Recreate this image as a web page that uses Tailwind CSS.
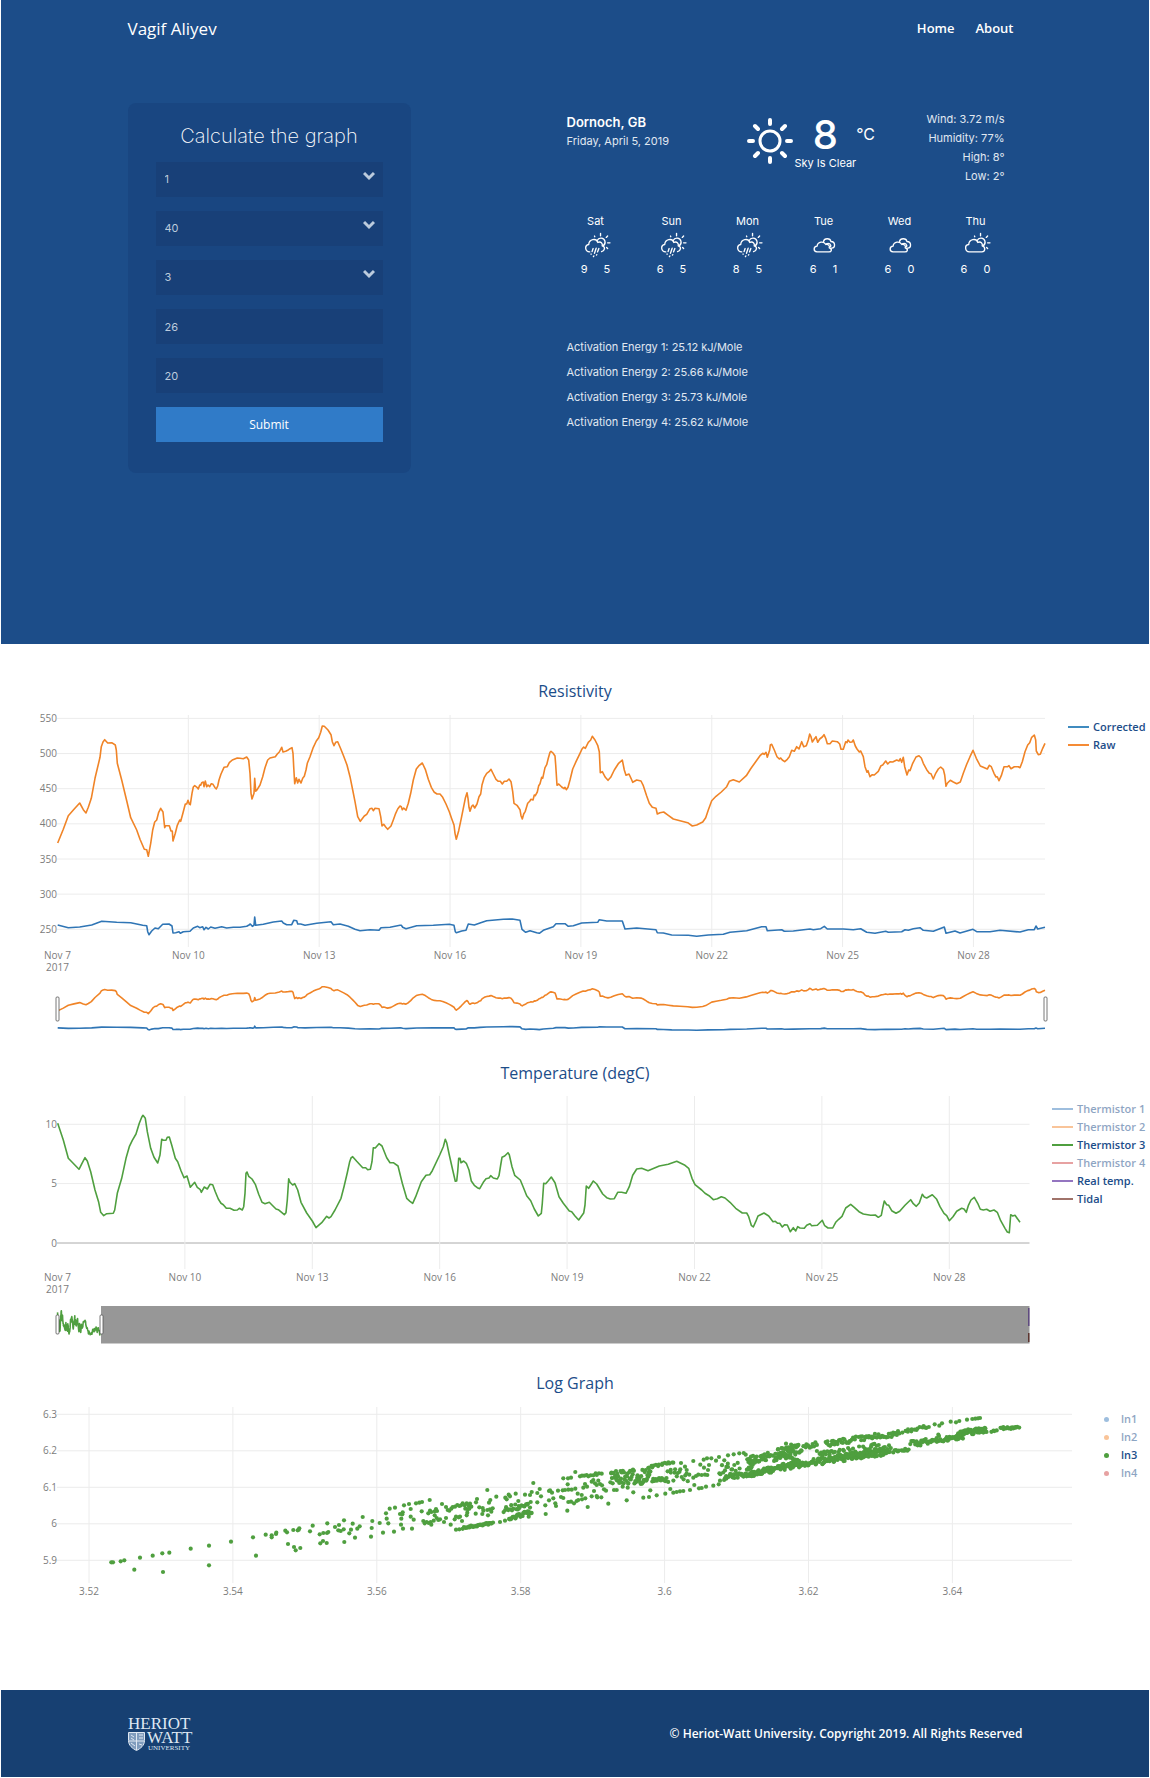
<!DOCTYPE html>
<html lang="en">
<head>
<meta charset="utf-8">
<meta name="viewport" content="width=device-width, initial-scale=1">
<title>Vagif Aliyev</title>
<script src="https://cdn.jsdelivr.net/npm/@tailwindcss/browser@4"></script>
</head>
<body class="bg-white font-['Open_Sans',sans-serif]">
<svg class="hidden" aria-hidden="true">
  <symbol id="sunny-cloud" viewBox="0 0 80 80">
    <g fill="none" stroke="currentColor" stroke-width="4" stroke-linecap="round" stroke-linejoin="round">
      <path d="M16 59C2 58 1 38 14 37C15 21 36 17 41 31C50 27 56 34 54 41C65 44 63 59 53 59Z"/>
      <path d="M39 25C44 15 59 16 62 27C64 34 61 38 57 41"/>
      <path d="M49 4v7M31 12l1 2M66 16l4-4M70 32h7M67 46l3 3"/>
    </g>
  </symbol>
  <symbol id="rain" viewBox="0 0 80 80">
    <g fill="none" stroke="currentColor" stroke-width="4" stroke-linecap="round" stroke-linejoin="round">
      <path d="M17 59C2 58 1 38 14 37C15 21 36 17 41 31C50 27 56 34 54 41C65 44 61 56 52 58"/>
      <path d="M39 25C44 15 59 16 62 27C64 34 61 38 57 41"/>
      <path d="M49 4v7M31 12l1 2M66 16l4-4M70 32h7M67 46l3 3"/>
      <path d="M27 49l-3 9M36 48l-5 15M44 49l-4 10M21 65l0 1M29 71l-1 2M38 67l-1 1"/>
    </g>
  </symbol>
  <symbol id="clouds" viewBox="0 0 80 80">
    <g fill="none" stroke="currentColor" stroke-width="4" stroke-linecap="round" stroke-linejoin="round">
      <path d="M15 59C3 58 4 43 15 42C17 28 35 26 41 37C50 36 53 42 51 47C61 50 58 59 50 59Z"/>
      <path d="M34 28C37 17 54 18 56 28C70 28 70 47 58 48"/>
      <path d="M42 35C51 31 58 37 55 44"/>
    </g>
  </symbol>
</svg>

<header class="mx-px bg-[#1c4d89] text-white px-[11%] pb-[171px]">
  <nav class="flex items-center justify-between h-[58px]">
    <a href="#" class="text-[17px]">Vagif Aliyev</a>
    <div class="flex gap-[21px] pr-[9px] text-[13px] font-semibold">
      <a href="#">Home</a>
      <a href="#">About</a>
    </div>
  </nav>
  <div class="flex items-start justify-between pt-[45px]">
    <form class="w-[283px] shrink-0 rounded-lg bg-[#194681] px-7 pt-[17px] pb-[31px] flex flex-col gap-[14px]">
      <h1 class="h-7 leading-8 text-center text-[20px] font-extralight font-[Inter,sans-serif]">Calculate the graph</h1>
      <div class="relative text-[11px] text-[#bccbdd] font-[Inter,sans-serif]">
        <select aria-label="Start" class="appearance-none w-full h-[35px] bg-[#184078] pl-[9px]"><option>1</option></select>
        <svg class="absolute right-2 top-2 w-3 h-3 pointer-events-none" viewBox="0 0 12 12" fill="none" stroke="currentColor" stroke-width="3"><path d="M1 3l5 5 5-5"/></svg>
      </div>
      <div class="relative text-[11px] text-[#bccbdd] font-[Inter,sans-serif]">
        <select aria-label="End" class="appearance-none w-full h-[35px] bg-[#184078] pl-[9px]"><option>40</option></select>
        <svg class="absolute right-2 top-2 w-3 h-3 pointer-events-none" viewBox="0 0 12 12" fill="none" stroke="currentColor" stroke-width="3"><path d="M1 3l5 5 5-5"/></svg>
      </div>
      <div class="relative text-[11px] text-[#bccbdd] font-[Inter,sans-serif]">
        <select aria-label="Thermistor" class="appearance-none w-full h-[35px] bg-[#184078] pl-[9px]"><option>3</option></select>
        <svg class="absolute right-2 top-2 w-3 h-3 pointer-events-none" viewBox="0 0 12 12" fill="none" stroke="currentColor" stroke-width="3"><path d="M1 3l5 5 5-5"/></svg>
      </div>
      <input aria-label="Reference temperature" value="26" class="w-full h-[35px] bg-[#184078] px-[9px] text-[11px] text-[#bccbdd] font-[Inter,sans-serif]">
      <input aria-label="Coefficient" value="20" class="w-full h-[35px] bg-[#184078] px-[9px] text-[11px] text-[#bccbdd] font-[Inter,sans-serif]">
      <button type="button" class="h-[35px] bg-[#307bc8] text-[12px] font-medium text-white">Submit</button>
    </form>

    <div class="w-[456px] shrink-0 font-[Inter,sans-serif] text-[11px] mr-[9px]">
      <div class="flex justify-between pl-[9px] pr-[9px] h-[107px]">
        <div class="pt-[9px]">
          <p class="text-[13px] leading-5 font-semibold">Dornoch, GB</p>
          <p class="leading-[18px] text-[#e0e8f1]">Friday, April 5, 2019</p>
        </div>
        <div class="flex pt-[14px] pl-[26px]">
          <svg class="w-12 h-12" viewBox="0 0 48 48" fill="none" stroke="currentColor" stroke-width="3" stroke-linecap="round"><circle cx="24" cy="24" r="10"/><path stroke-width="4" d="M24 3v4M24 41v4M3 24h4M41 24h4M9 9l3 3M36 36l3 3M9 39l3-3M36 12l3-3"/></svg>
          <div class="flex flex-col items-center">
            <span class="text-[40px] font-medium leading-9">8</span>
            <span class="leading-5">Sky Is Clear</span>
          </div>
          <span class="text-[16px] leading-[34px]">°C</span>
        </div>
        <div class="text-right leading-[19px] pt-[7px] text-[#e0e8f1]">
          <p>Wind: 3.72 m/s</p><p>Humidity: 77%</p><p>High: 8°</p><p>Low: 2°</p>
        </div>
      </div>
      <div class="grid grid-cols-6 text-center">
        <div class="flex flex-col items-center"><span class="leading-[22px]">Sat</span><svg class="w-[27px] h-[27px] ml-1"><use href="#rain"/></svg><p class="flex gap-4 leading-5"><span>9</span><span>5</span></p></div>
        <div class="flex flex-col items-center"><span class="leading-[22px]">Sun</span><svg class="w-[27px] h-[27px] ml-1"><use href="#rain"/></svg><p class="flex gap-4 leading-5"><span>6</span><span>5</span></p></div>
        <div class="flex flex-col items-center"><span class="leading-[22px]">Mon</span><svg class="w-[27px] h-[27px] ml-1"><use href="#rain"/></svg><p class="flex gap-4 leading-5"><span>8</span><span>5</span></p></div>
        <div class="flex flex-col items-center"><span class="leading-[22px]">Tue</span><svg class="w-[27px] h-[27px] ml-1"><use href="#clouds"/></svg><p class="flex gap-4 leading-5"><span>6</span><span>1</span></p></div>
        <div class="flex flex-col items-center"><span class="leading-[22px]">Wed</span><svg class="w-[27px] h-[27px] ml-1"><use href="#clouds"/></svg><p class="flex gap-4 leading-5"><span>6</span><span>0</span></p></div>
        <div class="flex flex-col items-center"><span class="leading-[22px]">Thu</span><svg class="w-[27px] h-[27px] ml-1"><use href="#sunny-cloud"/></svg><p class="flex gap-4 leading-5"><span>6</span><span>0</span></p></div>
      </div>
      <div class="pl-[9px] pt-14 leading-[25px] text-[#e0e8f1]">
        <p>Activation Energy 1: 25.12 kJ/Mole</p>
        <p>Activation Energy 2: 25.66 kJ/Mole</p>
        <p>Activation Energy 3: 25.73 kJ/Mole</p>
        <p>Activation Energy 4: 25.62 kJ/Mole</p>
      </div>
    </div>
  </div>
</header>

<main class="text-[#1c4d89]">
  <section>
    <h2 class="pt-[35px] h-[66px] leading-6 text-center text-[16px] font-medium">Resistivity</h2>
    <div class="flex">
      <svg id="resistivity" class="flex-1 min-w-0 text-[10px]" viewBox="0 710 1068 335"></svg>
      <div class="w-[82px] shrink-0 pt-2 text-[11px] font-semibold">
        <button type="button" class="flex items-center gap-1 h-[18px]"><span class="w-[21px] h-[2px] bg-[#1f77b4]/85"></span>Corrected</button>
        <button type="button" class="flex items-center gap-1 h-[18px]"><span class="w-[21px] h-[2px] bg-[#f58b35]"></span>Raw</button>
      </div>
    </div>
  </section>
  <section>
    <h2 class="pt-4 h-[45px] leading-6 text-center text-[16px] font-medium">Temperature (degC)</h2>
    <div class="flex">
      <svg id="temperature" class="flex-1 min-w-0 text-[10px]" viewBox="0 1090 1052 260"></svg>
      <div class="w-[98px] shrink-0 pt-[10px] text-[11px] font-semibold">
        <button type="button" class="flex items-center gap-1 h-[18px] opacity-50"><span class="w-[21px] h-[2px] bg-[#3f7fbf]"></span>Thermistor 1</button>
        <button type="button" class="flex items-center gap-1 h-[18px] opacity-50"><span class="w-[21px] h-[2px] bg-[#f58b35]"></span>Thermistor 2</button>
        <button type="button" class="flex items-center gap-1 h-[18px]"><span class="w-[21px] h-[2px] bg-[#4f9f3f]"></span>Thermistor 3</button>
        <button type="button" class="flex items-center gap-1 h-[18px] opacity-50"><span class="w-[21px] h-[2px] bg-[#d04848]"></span>Thermistor 4</button>
        <button type="button" class="flex items-center gap-1 h-[18px]"><span class="w-[21px] h-[2px] bg-[#9475c0]"></span>Real temp.</button>
        <button type="button" class="flex items-center gap-1 h-[18px]"><span class="w-[21px] h-[2px] bg-[#a0736a]"></span>Tidal</button>
      </div>
    </div>
  </section>
  <section>
    <h2 class="pt-[21px] h-[50px] leading-6 text-center text-[16px] font-medium">Log Graph</h2>
    <div class="flex">
      <svg id="log-graph" class="flex-1 min-w-0 text-[10px]" viewBox="0 1400 1104 200"></svg>
      <div class="w-[46px] shrink-0 pt-[10px] text-[11px] font-semibold">
        <button type="button" class="flex items-center gap-3 h-[18px] opacity-50"><span class="w-[5px] h-[5px] rounded-full bg-[#3f7fbf]"></span>ln1</button>
        <button type="button" class="flex items-center gap-3 h-[18px] opacity-50"><span class="w-[5px] h-[5px] rounded-full bg-[#f58b35]"></span>ln2</button>
        <button type="button" class="flex items-center gap-3 h-[18px]"><span class="w-[5px] h-[5px] rounded-full bg-[#4f9f3f]"></span>ln3</button>
        <button type="button" class="flex items-center gap-3 h-[18px] opacity-50"><span class="w-[5px] h-[5px] rounded-full bg-[#d04848]"></span>ln4</button>
      </div>
    </div>
  </section>
</main>

<footer class="mt-[90px] mx-px mb-px bg-[#174072] text-white h-[87px] px-[11%] flex items-center justify-between">
  <svg class="w-16 h-[34px] overflow-visible" viewBox="0 0 64 34" fill="#dfe8f2" font-family="Liberation Serif, serif" role="img" aria-label="Heriot Watt University">
    <text x="0" y="12" font-size="17">HERIOT</text>
    <text x="19" y="26" font-size="17">WATT</text>
    <text x="20" y="33" font-size="7">UNIVERSITY</text>
    <path d="M.5 15.500h16v8c0 5-4 8-8 10c-4-2-8-5-8-10z" fill="#7f9cbd" stroke="#dfe8f2"/>
    <path d="M3 18l3 2M3 21l3 2M8.500 16v17M1 24h15M11 18h4M11 21h4M3 26l4 3M11 27l3 1" stroke="#dfe8f2" fill="none"/>
  </svg>
  <p class="text-[12px] font-semibold">© Heriot-Watt University. Copyright 2019. All Rights Reserved</p>
</footer>

<script>
const NS = 'http://www.w3.org/2000/svg';
function add(parent, tag, attrs, text) {
  const el = document.createElementNS(NS, tag);
  for (const k in attrs) el.setAttribute(k, attrs[k]);
  if (text !== undefined) el.textContent = text;
  parent.appendChild(el);
  return el;
}
// Samples are stored in thirds of a plot unit, in chunks that each start at their own x.
function parse(chunks) {
  return chunks.flatMap(([dx, s]) => s.trim().split(/\s+/).map(p => {
    const [x, y] = p.split(',').map(Number);
    return [x + dx, y];
  }));
}
function line(svg, pts, color, fx, fy, w = 1.6) {
  add(svg, 'polyline', { points: pts.map(([x, y]) => fx(x).toFixed(1) + ',' + fy(y).toFixed(1)).join(' '),
    fill: 'none', stroke: color, 'stroke-width': w, 'stroke-linejoin': 'round' });
}
function axes(svg, o) {
  for (const [y, label] of o.ys) {
    add(svg, 'line', { x1: 57, x2: o.right, y1: y, y2: y, stroke: label === '0' && o.zero ? '#aaa' : '#ececec' });
    add(svg, 'text', { x: 57, y: y + 3.5, 'text-anchor': 'end', fill: '#7c7c7c' }, label);
  }
  for (const [x, label] of o.xs) {
    if (x > 57.5) add(svg, 'line', { x1: x, x2: x, y1: o.top, y2: o.bottom, stroke: '#ececec' });
    add(svg, 'text', { x, y: o.bottom + 11.5, 'text-anchor': 'middle', fill: '#7c7c7c' }, label);
  }
  if (o.year) add(svg, 'text', { x: 57.5, y: o.bottom + 24, 'text-anchor': 'middle', fill: '#7c7c7c' }, '2017');
}
const handle = (svg, x, y, h) => add(svg, 'rect', { x: x - 1.5, y, width: 3, height: h, rx: 1, fill: '#fff', stroke: '#555', 'stroke-width': 0.8 });

const raw = parse([
 [0, `173,519 190,478 205,437 222,418 239,399 250,419 258,429 265,412 274,385 285,325 300,262 304,230 309,216 314,209 323,219 335,218 346,225 349,240 352,280 365,330 380,392 392,443 410,480 420,508 433,538 440,539 445,559 452,520 458,480 464,456 470,450 476,427 482,415 489,426 494,473 497,467 508,467 513,483 517,483 519,513 526,490 532,466 539,450 542,454 548,432 556,402 560,402 564,391 568,402 571,404 576,370 580,351 584,347 592,353 595,357 599,345 602,346 605,338 610,336 612,350 616,333 620,350 624,345 629,350 634,341 639,343 645,353 649,357 653,348 657,330 663,312 672,292 682,290 688,278 697,270 712,264 720,265 730,266 740,261 746,270 750,310 753,370 756,387 762,370 764,325 767,364 770,361 780,345 788,320 795,293 803,270 810,264 826,260 832,252 838,246 845,232 849,246 857,244 863,241 870,236 876,233 879,250 881,290 884,341 889,323 893,339 897,328 903,339 908,325 913,319 918,300 922,280 930,260 940,232 949,213 956,203 962,187 967,168 973,169 984,180 993,194 997,215 1002,227 1007,217 1013,215 1022,236 1031,259 1041,285 1050,320 1058,360 1065,395 1073,440 1081,454 1093,438 1100,433 1110,416 1116,415 1120,422 1125,415 1137,416 1142,440 1146,468 1151,463 1157,471 1163,478 1173,468 1180,450 1187,430 1193,417`],
 [1140, `60,408 64,410 67,419 71,414 78,421 85,400 92,370 100,330 109,297 118,286 127,279 136,298 145,328 154,352 163,367 171,372 180,372 188,382 198,402 208,425 215,446 222,465 225,490 229,508 236,482 244,445 250,415 256,385 261,368 264,385 267,412 270,424 275,409 279,405 284,414 291,402 297,380 302,372 306,345 313,322 320,310 327,305 333,298 340,312 348,328 355,334 361,334 367,342 373,334 380,334 387,327 393,335 398,365 402,400 411,406 420,419 423,437 427,447 431,432 436,424 443,400 449,394 453,388 459,390 463,375 466,377 472,366 476,347 480,341 485,322 488,325 495,293 500,284 505,265 510,247 513,244 519,249 525,258 527,285 531,346 536,342 545,351 552,356 555,352 559,359 564,352 570,330 578,297 588,275 600,250 606,237 611,231 616,235 625,217 632,210 637,199 645,210 653,226 658,245 661,308 667,305 676,322 684,331 692,322 703,300 715,281 727,270 733,300 738,316 747,312 753,325 758,337 770,330 783,333 790,347 800,378 808,400 817,412 828,415 832,432 840,428 851,426 865,436 880,447 900,452 923,458 937,468 950,465 968,456 977,443 985,420 995,392 1008,379 1024,366 1040,350 1048,334 1060,329 1078,336 1099,317 1112,296 1127,275 1140,257 1148,250 1153,253 1158,247 1162,262 1169,240 1171,225 1175,223 1183,240 1191,260`],
 [2250, `88,267 92,264 97,270 104,275 112,268 118,260 125,241 133,244 140,230 147,237 155,215 161,230 169,227 175,210 179,192 183,200 187,216 193,207 198,200 203,217 209,207 217,201 222,194 227,205 232,221 240,221 247,213 262,215 269,222 273,238 280,238 287,215 291,218 294,210 300,217 306,216 310,210 316,228 321,237 328,246 332,243 340,260 345,290 351,307 354,302 360,320 367,314 373,315 385,304 393,287 398,285 407,273 413,282 420,275 428,276 440,270 447,273 451,266 455,277 460,262 464,290 471,315 476,300 480,302 488,280 498,261 507,257 514,264 520,280 530,299 538,310 543,311 550,327 557,310 565,297 572,291 580,298 584,315 588,349 592,340 601,331 610,336 620,341 631,336 640,310 650,283 660,260 669,241 679,265 691,288 700,292 712,297 718,286 724,290 732,310 738,321 742,320 747,332 754,317 762,290 773,290 777,287 783,296 793,290 805,290 810,293 817,275 825,245 833,225 839,218 845,202 853,195 857,210 859,243 865,254 871,253 878,235 885,220`]]);
const corrected = parse([
 [0, `173,765 205,773 239,771 275,765 305,754 350,757 392,758 428,766 440,767 443,785 447,794 455,783 465,774 475,776 488,763 507,762 516,768 519,789 527,788 537,785 541,790 550,785 570,784 580,774 593,769 599,773 608,770 612,779 618,772 625,777 632,771 645,775 665,770 680,774 700,772 720,772 740,769 747,765 751,762 757,769 762,766 764,741 767,766 790,763 820,756 845,753 850,759 860,764 875,764 881,751 890,752 893,762 902,762 915,766 950,760 993,755 1000,764 1020,762 1045,769 1065,778 1080,782 1110,779 1137,781 1143,773 1170,772 1200,766`],
 [1140, `64,766 68,772 78,776 110,767 160,766 208,763 222,766 226,785 229,788 245,783 258,781 265,762 283,765 300,759 320,752 370,748 397,747 420,751 426,778 437,787 450,782 470,788 478,790 490,781 520,770 528,761 555,761 565,769 580,767 605,759 653,757 658,749 680,753 727,753 735,777 770,774 828,779 832,788 850,789 875,795 925,796 950,799 985,795 1030,793 1050,787 1100,782 1145,770`],
 [2250, `48,770 52,782 95,779 103,784 130,783 180,777 190,779 212,776 223,769 232,777 280,777 310,779 332,776 350,787 375,790 407,784 415,787 455,785 465,779 475,781 490,776 510,773 520,781 550,784 583,771 588,790 615,783 630,789 669,778 680,785 720,785 750,781 810,786 835,779 853,779 858,768 863,777 885,772`]]);
const thermistor3 = parse([
 [0, `173,220 190,270 205,325 237,358 246,340 255,323 262,333 272,365 285,420 296,457 302,487 311,497 320,491 340,490 344,480 352,430 365,385 378,325 388,290 397,271 408,252 418,220 425,202 429,196 436,205 442,245 452,295 462,322 473,339 480,315 485,268 490,271 498,271 502,262 508,261 515,285 526,325 533,335 543,362 552,383 561,378 571,412 584,397 592,412 600,418 604,427 613,411 622,417 630,403 638,404 646,425 655,447 663,460 670,464 679,475 690,475 702,481 712,480 718,475 727,480 731,470 735,430 738,370 741,366 746,379 756,387 766,403 776,433 786,457 795,461 808,457 816,465 828,477 835,479 853,494 858,488 862,450 866,386 870,397 878,405 884,401 893,420 903,457 920,489 937,513 948,533 965,518 980,499 987,504 993,500 1005,480 1023,445 1032,410 1042,368 1049,335 1053,324 1058,320 1070,334 1088,353 1097,353 1103,359 1111,358 1116,335 1120,293 1126,294 1137,281 1146,288 1160,323 1170,338 1180,338`],
 [1140, `54,348 67,400 80,445 90,454 98,460 107,440 124,395 138,376 149,374 157,362 179,315 190,290 196,268 200,278 208,315 218,360 226,394 230,393 233,365 236,325 240,325 243,338 251,333 259,340 267,360 274,393 283,406 292,413 299,416 310,397 318,386 327,384 332,377 340,384 352,387 357,377 362,345 366,322 374,318 384,308 388,314 396,350 404,376 421,390 430,412 440,437 452,452 463,477 475,498 484,490 487,460 491,400 497,401 505,392 514,381 525,398 537,440 550,460 568,483 575,485 585,498 596,510 611,489 615,465 619,408 626,415 640,393 650,402 668,432 680,443 691,447 703,446 713,427 725,427 738,430 748,410 758,376 770,357 785,355 804,362 838,348 865,343 890,334 915,346 926,355 936,385 945,404 965,420 975,430 987,437 1000,449 1012,446 1024,440 1035,444 1050,457 1067,475 1087,489 1100,489 1106,500 1114,526 1120,531 1127,515 1134,498`],
 [2250, `42,489 56,498 69,515 76,514 83,520 89,520 97,531 104,524 112,525 121,545 130,533 137,543 143,530 150,534 163,535 170,526 180,521 185,527 202,526 217,511 224,527 234,534 248,534 257,517 266,508 276,499 287,474 302,463 313,472 327,485 340,492 362,496 376,495 385,502 394,496 399,470 403,453 410,464 416,466 425,482 438,490 449,484 465,466 482,449 490,461 499,469 508,459 517,433 523,441 530,444 547,434 560,448 570,470 582,490 590,497 598,512 609,500 620,484 635,475 642,477 649,487 655,467 663,450 673,442 683,460 691,478 700,480 710,478 720,484 732,480 742,487 752,512 765,535 772,546 778,548 782,494 788,498 795,496 810,517`]]);

const days = ['Nov 7', 'Nov 10', 'Nov 13', 'Nov 16', 'Nov 19', 'Nov 22', 'Nov 25', 'Nov 28'];

const r = document.getElementById('resistivity');
axes(r, { right: 1045, top: 715, bottom: 947, year: true,
  ys: ['550', '500', '450', '400', '350', '300', '250'].map((l, i) => [718.4 + i * 35.15, l]),
  xs: days.map((l, i) => [57.5 + i * 130.85, l]) });
line(r, corrected, '#2f75b5', x => x / 3, y => 670 + y / 3);
line(r, raw, '#f08427', x => x / 3, y => 670 + y / 3);
const mini = y => 670 + (950 + (y - 168) * 0.207) / 3;
line(r, raw, '#f08427', x => x / 3, mini);
line(r, corrected, '#2f75b5', x => x / 3, mini);
handle(r, 57.5, 997, 24);
handle(r, 1045.5, 997, 24);

const t = document.getElementById('temperature');
axes(t, { right: 1029.5, top: 1096, bottom: 1269, year: true, zero: true,
  ys: [[1124.3, '10'], [1183.6, '5'], [1243, '0']],
  xs: days.map((l, i) => [57.5 + i * 127.4, l]) });
line(t, thermistor3, '#4f9f3f', x => x / 3, y => 1050 + y / 3);
line(t, thermistor3, '#4f9f3f', x => 57.5 + (x - 173) / 3 * 0.0445, y => 1050 + (782 + (y - 195) * 0.207) / 3);
add(t, 'rect', { x: 101, y: 1306, width: 928.5, height: 37.5, fill: '#979797' });
add(t, 'rect', { x: 1028, y: 1308, width: 1.5, height: 18, fill: '#5f4a80' });
add(t, 'rect', { x: 1028, y: 1333, width: 1.5, height: 9, fill: '#5d3530' });
handle(t, 57.5, 1315, 19);
handle(t, 101.5, 1315, 19);

const g = document.getElementById('log-graph');
axes(g, { right: 1072, top: 1407, bottom: 1583,
  ys: ['6.3', '6.2', '6.1', '6', '5.9'].map((l, i) => [1414.3 + i * 36.5, l]),
  xs: ['3.52', '3.54', '3.56', '3.58', '3.6', '3.62', '3.64'].map((l, i) => [89 + i * 143.9, l]) });
const dots = parse([
 [0, `334,607 339,607 362,604 373,601 420,593 403,629 458,587 487,580 508,578 489,636 572,566 627,557 627,616 693,545 759,532 768,587 797,524 815,526 815,532 828,522 829,518 856,512 861,517 864,552 880,510 882,561 887,571 893,511 896,509 898,505 901,564 930,514 938,497 959,523 961,550 969,543 970,519 980,549 981,519 982,490 985,516 1005,501 1015,511 1017,495 1022,513 1031,508 1032,481 1033,546 1048,520 1053,509 1058,491 1065,533 1072,506 1079,499 1088,471 1113,530 1115,504 1117,483 1139,489 1149,518 1158,460 1160,476 1165,490 1169,446 1182,515 1185,443`],
 [1200, `12,436 27,432 32,447 48,430 58,428 66,426 89,420 7,463 8,457 0,462 4,476 3,494 9,506 36,506 32,470 41,479 65,454 85,460 90,452 94,456 70,483 74,490 80,486 86,489 92,486 94,494 101,482 108,447 104,454 111,453 104,466 110,474 115,480 120,478 126,432 132,486 138,474 152,494 138,441 143,450 148,452 154,446 158,441 165,440 172,435 178,438 183,436 188,430 194,436 200,430 206,438 210,431 214,440 196,446 203,448 208,446 202,458 200,466 180,470 168,470 164,478 176,472 186,483 227,461 231,417 228,427 238,442 248,444 262,390 271,420 267,428 262,450 250,452 247,462 264,466 270,448 274,455 278,445 289,410 168,509 178,508 300,486 315,482 386,470 316,413 320,418 326,404 330,409 347,401 355,423 375,404 390,405 395,396 400,369 392,426 382,432 412,427 412,399 419,387 423,409 436,436 437,462 447,421 447,393 450,391 456,398 460,415 466,430 468,438 474,392 483,411 490,414 488,391 495,390 505,389 515,389 526,386 490,355 504,355 513,353 503,373 526,336 502,452 505,426 513,425 522,430 530,423 535,420 546,418 556,415 533,401 545,405 563,441 540,349 546,347 553,347 560,345 565,349 572,346 580,346 587,340 590,345 597,340 605,341 550,383 555,372 561,380 575,365 580,360 585,370 590,375 595,362 600,372 606,376 582,393 575,409 590,408 592,412 604,412 612,388 618,392 625,431 642,390 650,390 668,380 680,421 700,397 683,383 730,413 747,411 751,391 770,406 796,401 811,387 820,398 830,396 840,394 850,393 870,390 883,375 897,385 905,384 918,380 940,377 956,373 960,362 843,309 880,303 911,299 921,295 934,295 948,302 957,291 973,301 984,286 1001,283 1018,280 1031,279 1037,284 901,314 912,323 927,315 924,330 855,320 860,330 868,344 880,353 888,348 895,344 905,345 915,344 922,345 1158,251 1190,256`],
 [2250, `554,193 568,197 576,190 602,185 618,187 628,183 651,179 667,177 676,176 684,175 690,174 565,224 567,228`]]);
// Dense bands: x0, y0, x1, y1, spread, count
const bands = [
 [1388, 504, 1480, 489, 3, 32], [1525, 478, 1597, 453, 6, 30], [1510, 448, 1590, 434, 9, 22],
 [1830, 352, 1890, 352, 20, 36], [1890, 352, 1952, 347, 23, 34], [1940, 323, 2022, 306, 3, 16],
 [1955, 362, 2000, 358, 6, 16], [2000, 348, 2065, 345, 20, 16],
 [2170, 354, 2290, 336, 7, 40], [2290, 327, 2400, 317, 5, 25], [2155, 330, 2220, 325, 18, 16],
 [2240, 320, 2260, 318, 24, 18], [2250, 302, 2320, 290, 8, 14], [2325, 285, 2400, 270, 17, 34], [2370, 305, 2400, 305, 12, 14],
 [2250, 341, 2340, 326, 9, 24], [2340, 322, 2660, 275, 10, 140], [2660, 274, 2730, 264, 8, 14],
 [2730, 252, 2810, 241, 9, 28], [2810, 242, 2890, 230, 6, 28], [2870, 222, 2960, 208, 9, 46],
 [2974, 214, 2992, 213, 2, 4], [3000, 204, 3058, 202, 4, 16],
 [2250, 302, 2310, 286, 12, 18], [2322, 290, 2380, 265, 15, 24], [2400, 268, 2455, 252, 10, 12],
 [2475, 252, 2570, 237, 9, 28], [2575, 236, 2700, 220, 8, 36], [2450, 288, 2670, 262, 16, 85],
 [2707, 215, 2790, 199, 5, 15]];
let seed = 7;
const rnd = () => (seed = (seed * 16807) % 2147483647) / 2147483647;
for (const [x0, y0, x1, y1, s, n] of bands)
  for (let i = 0; i < n; i++) {
    const k = (i + rnd()) / n;
    dots.push([x0 + (x1 - x0) * k, y0 + (y1 - y0) * k + (rnd() * 2 - 1) * s]);
  }
for (const [x, y] of dots)
  add(g, 'circle', { cx: (x / 3).toFixed(1), cy: (1360 + y / 3).toFixed(1), r: 2.1, fill: '#4f9f3f' });
</script>
</body>
</html>
